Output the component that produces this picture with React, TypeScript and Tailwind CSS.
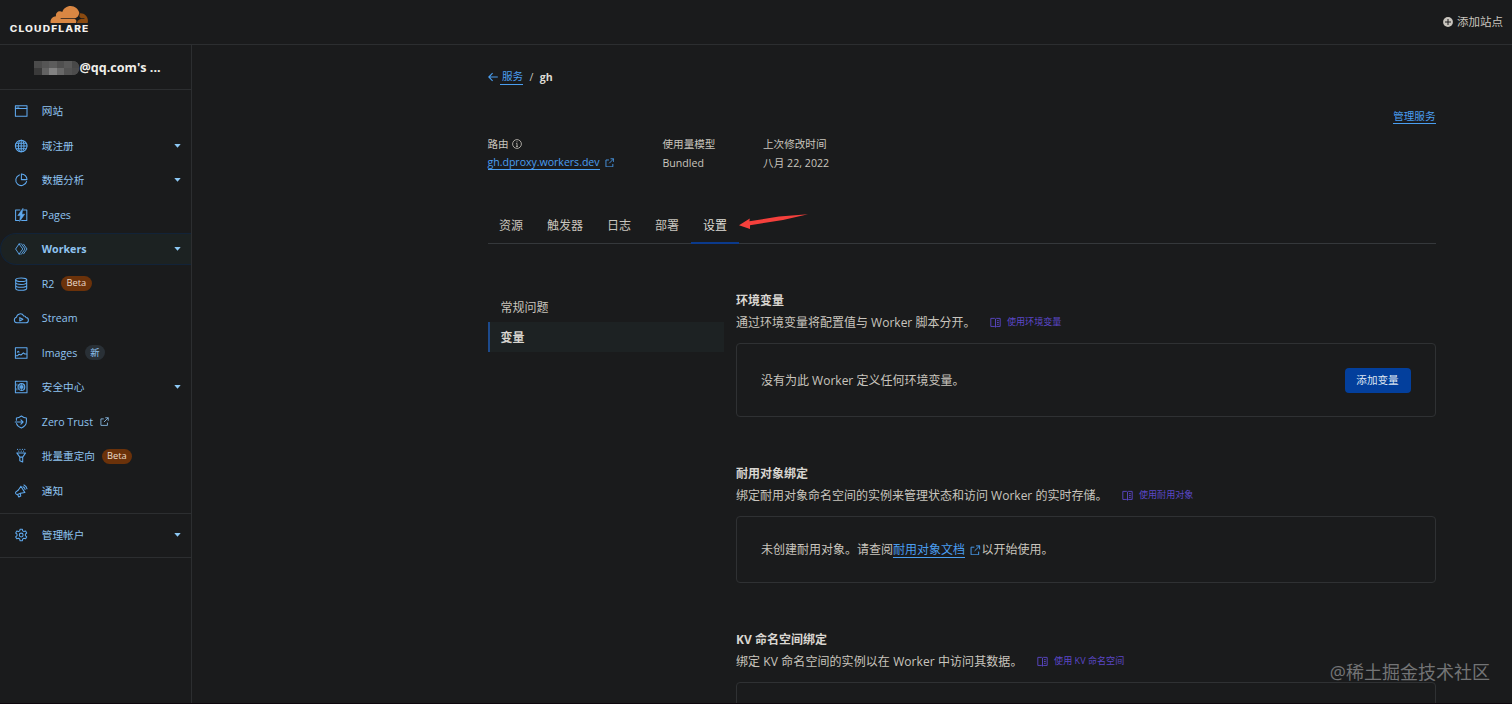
import type { ReactNode } from 'react';

type IconProps = { children: ReactNode };

function Icon({ children }: IconProps) {
  return (
    <svg
      viewBox="0 0 16 16"
      className="h-4 w-4 shrink-0 overflow-visible"
      fill="none"
      stroke="#5fa9ee"
      strokeWidth="1.050"
      strokeLinejoin="round"
      strokeLinecap="round"
    >
      {children}
    </svg>
  );
}

const icons = {
  site: (
    <Icon>
      <rect x="2.4" y="2.700" width="11.6" height="10.600" />
      <path d="M2.4 5.500h11.4M4 4.100h.3M5.6 4.100h.3" />
    </Icon>
  ),
  globe: (
    <Icon>
      <circle cx="8.2" cy="8" r="5.8" />
      <ellipse cx="8.2" cy="8" rx="2.8" ry="5.8" />
      <path d="M8.2 2.2v11.6M2.4 8H14M3.200 5.2h10M3.200 10.8h10" />
    </Icon>
  ),
  pie: (
    <Icon>
      <path d="M6.400 2.900A5.5 5.5 0 1 0 13.6 9.500" />
      <path d="M8.400 1.900v5.700h5.600A5.7 5.7 0 0 0 8.400 1.900z" />
    </Icon>
  ),
  pages: (
    <Icon>
      <path d="M7 3H2.6v10.4h3.2M10.400 3h3.4v10.4H8.6" />
      <path d="M9.8 1.6 4.8 8.6h2.6l-.8 5.8 5-7.200H9z" fill="#5fa9ee" strokeWidth="0.6" />
    </Icon>
  ),
  workers: (
    <Icon>
      <path
        d="M6 3 2.6 8 6 13M6 3h1.200M6 13h1.200M6.400 3.400 9.8 8l-3.4 4.600M8.4 2.8 12 8l-3.600 5.200M10.6 3.200 14 8l-3.400 4.800"
        strokeWidth="0.9"
      />
    </Icon>
  ),
  r2: (
    <Icon>
      <ellipse cx="8.2" cy="3.7" rx="5.5" ry="1.8" />
      <path d="M2.7 3.7v8.8c0 1 2.4 1.8 5.5 1.8s5.5-.8 5.5-1.8V3.7M2.7 6.6c0 1 2.4 1.8 5.5 1.8s5.500-.8 5.500-1.8M2.700 9.5c0 1 2.4 1.8 5.500 1.8s5.500-.8 5.500-1.8" />
    </Icon>
  ),
  stream: (
    <Icon>
      <path d="M3.800 12.8h8.800a2.600 2.600 0 0 0 .400-5.200 2.100 2.100 0 0 0-2.300-1.600A3.800 3.800 0 0 0 3.500 7.300 2.800 2.800 0 0 0 3.800 12.800z" />
      <path d="M6.800 7.600v3.400L9.900 9.300z" />
    </Icon>
  ),
  images: (
    <Icon>
      <rect x="2.4" y="2.800" width="11.6" height="10.400" />
      <path d="M2.600 10.800H4.500L6 9.200l2 .8 2.400-2.200 1.300 1.200h2M4.400 7.200l.8-.8.8.800" />
    </Icon>
  ),
  security: (
    <Icon>
      <rect x="2.4" y="2.2" width="11.6" height="11.6" />
      <circle cx="8.4" cy="8" r="3.400" />
      <circle cx="8.4" cy="8" r="1.300" />
      <path d="M8.4 4.8v6.4M5.200 8h6.4M6.200 5.8l4.4 4.4M10.6 5.8 6.200 10.2M3.9 5v1.4M3.9 9.6V11" strokeWidth="0.8" />
    </Icon>
  ),
  zero: (
    <Icon>
      <path d="M3.400 6.200V4C5.200 4 6.900 3.200 8.400 2c1.500 1.200 3.200 2 5 2v3.600c0 3-2 5.200-5 6.400-2.600-1-4.400-2.700-4.900-4.400" />
      <path d="M2.200 8H10M7.900 5.900 10.100 8l-2.200 2.100" />
    </Icon>
  ),
  funnel: (
    <Icon>
      <path d="M3.800 4.900h8.800L9.700 9.100v4.900l-2.900-1.300V9.100zM6.900 9.100h2.600" />
      <path d="M4.600 1.300v.2M7 1.300v.2M9.400 1.300v.2M11.800 1.300v.2M5.800 3v.2M8.200 3v.2M10.600 3v.2" />
    </Icon>
  ),
  notify: (
    <Icon>
      <path d="M7.900 3.200 5.400 7 2.700 9.200c-.6.900.5 2.400 1.700 2.300l3.200-1.300 4.300-.6z" />
      <path d="M4.600 11.500 5.800 14l2-1-.6-2.600M10 3.800c1.100.5 1.900 1.400 2.100 2.600M11 1.900c1.600.7 2.700 2 3 3.900" />
    </Icon>
  ),
  gear: (
    <Icon>
      <path d="M7.100 2.200h2.200l.4 1.700 1.200.7 1.700-.5 1.100 1.900-1.300 1.200v1.500l1.300 1.200-1.100 1.900-1.700-.5-1.200.7-.4 1.800H7.100L6.700 12l-1.200-.7-1.700.5-1.100-1.900L4 8.700V7.200L2.700 6l1.100-1.900 1.700.5 1.200-.7z" />
      <circle cx="8.200" cy="8" r="1.900" />
    </Icon>
  ),
};

function External({ className }: { className: string }) {
  return (
    <svg viewBox="0 0 12 12" className={className} fill="none" stroke="currentColor" strokeWidth="1.1">
      <path d="M5 2.500H1.200v8.700h8.700V7.500M7 1h4v4M11 1 5.300 6.700" />
    </svg>
  );
}

type Item = {
  icon: ReactNode;
  label: string;
  caret?: boolean;
  badge?: string;
  isNew?: boolean;
  external?: boolean;
  active?: boolean;
};

const items: Item[] = [
  { icon: icons.site, label: '网站' },
  { icon: icons.globe, label: '域注册', caret: true },
  { icon: icons.pie, label: '数据分析', caret: true },
  { icon: icons.pages, label: 'Pages' },
  { icon: icons.workers, label: 'Workers', caret: true, active: true },
  { icon: icons.r2, label: 'R2', badge: 'Beta' },
  { icon: icons.stream, label: 'Stream' },
  { icon: icons.images, label: 'Images', isNew: true },
  { icon: icons.security, label: '安全中心', caret: true },
  { icon: icons.zero, label: 'Zero Trust', external: true },
  { icon: icons.funnel, label: '批量重定向', badge: 'Beta' },
  { icon: icons.notify, label: '通知' },
];

function NavRow({ item }: { item: Item }) {
  return (
    <li className="flex h-[34.5px] items-center">
      <a
        className={
          item.active
            ? 'flex h-8 w-full items-center rounded-l-2xl border-y border-l border-[#122338] bg-[#1c2222] pr-[10px] pl-[12px] font-bold'
            : 'flex h-8 w-full items-center pr-[10px] pl-[13px]'
        }
      >
        {item.icon}
        <span className="ml-[12.800px] whitespace-nowrap">{item.label}</span>
        {item.badge && (
          <span className="ml-[6.500px] h-[15px] rounded-full bg-[#6b320a] px-[5.500px] text-[9.300px] leading-[14px] text-[#ecdccb]">
            {item.badge}
          </span>
        )}
        {item.isNew && (
          <span className="ml-[7.500px] h-[15px] rounded-full bg-[#293036] px-[5.500px] text-[9.300px] leading-[15px] text-[#8fc3f0]">
            新
          </span>
        )}
        {item.external && <External className="ml-[7px] h-[9px] w-[9px]" />}
        {item.caret && (
          <svg viewBox="0 0 8 5" className="ml-auto h-[4px] w-[7px]" fill="#8cc8f5">
            <path d="M0 0h8L4 4.800z" />
          </svg>
        )}
      </a>
    </li>
  );
}

function DocLink({ children }: IconProps) {
  return (
    <a className="ml-[14.500px] flex items-center text-[9.100px] text-[#5b47c6]">
      <svg viewBox="0 0 12 12" className="mr-[6px] h-[11px] w-[11px]" fill="none" stroke="currentColor" strokeWidth="1">
        <path d="M6 2.200 5 1.500H.9v8.800H5l1 .7 1-.7h4.100V1.500H7zM6 2.200V11M7.600 4h2M7.600 6h2M7.600 8h2" />
      </svg>
      {children}
    </a>
  );
}

type SectionProps = { title: string; desc: string; doc: string; card: string; wide?: boolean; children?: ReactNode };

function Section({ title, desc, doc, card, wide, children }: SectionProps) {
  return (
    <section>
      <h2 className="h-5 text-[12px] leading-[22px] font-bold text-[#d9d6d1]">{title}</h2>
      <div className="mt-px flex h-[22px] items-center whitespace-nowrap">
        <p className={wide ? 'pt-[2px] tracking-[0.080px]' : 'pt-[2px]'}>{desc}</p>
        <DocLink>{doc}</DocLink>
      </div>
      <div className={card}>{children}</div>
    </section>
  );
}

const tabs = ['资源', '触发器', '日志', '部署'];

export default function App() {
  return (
    <div className="relative flex h-[704px] w-[1512px] flex-col overflow-hidden bg-[#1a1b1c] font-['Open_Sans','Noto_Sans_CJK_SC',sans-serif] text-[12px] leading-5 text-[#c9c5be]">
      <header className="flex h-[45px] shrink-0 justify-between border-b border-[#2c2e30] pr-[9px] pl-[9px]">
        <svg viewBox="0 0 82 36" className="h-9 w-[82px]">
          <g transform="translate(41.500 -4.300) scale(1.560)">
            <path
              fill="#d98743"
              d="M16.5088 16.8447c.1475-.5068.0908-.9707-.1553-1.3154-.2246-.3164-.6045-.499-1.0615-.5205l-8.6592-.1123a.1559.1559 0 0 1-.1333-.0713c-.0283-.042-.0351-.0986-.021-.1553.0278-.084.1123-.1484.2036-.1562l8.7359-.1123c1.0351-.0489 2.1601-.8868 2.5537-1.9136l.499-1.3013c.0215-.0561.0293-.1128.0147-.168-.5625-2.5463-2.835-4.4453-5.5499-4.4453-2.5039 0-4.6284 1.6177-5.3876 3.8614-.4927-.3658-1.1187-.5625-1.794-.499-1.2026.119-2.1665 1.083-2.2861 2.2856-.0283.31-.0069.6128.0635.894C1.5683 13.171 0 14.7754 0 16.752c0 .1748.0142.3515.0352.5273.0141.083.0844.1475.1689.1475h15.9814c.0909 0 .1758-.0645.2032-.1553l.12-.4268z"
            />
            <path
              fill="#8a4a10"
              d="M19.2656 11.2813c-.0771 0-.1611 0-.2383.0112-.0566 0-.1054.0415-.127.0976l-.3378 1.1744c-.1475.5068-.0918.9707.1543 1.3164.2256.3164.6055.498 1.0625.5195l1.8437.1133c.0557 0 .1055.0263.1329.0703.0283.043.0351.1074.0214.1562-.0283.084-.1132.1485-.204.1553l-1.921.1123c-1.041.0488-2.1582.8867-2.5527 1.914l-.1406.3585c-.0283.0713.0215.1416.0986.1416h6.5977c.0771 0 .1474-.0489.169-.126.1122-.4082.1757-.837.1757-1.2803 0-2.6025-2.125-4.727-4.7344-4.727"
            />
          </g>
          <text
            x="0.500"
            y="32.400"
            transform="translate(0.100 0) scale(1.200 1)"
            textLength="65.500"
            lengthAdjust="spacing"
            className="fill-[#f2f0ec] font-['Inter',sans-serif] text-[8.500px] font-extrabold"
          >
            CLOUDFLARE
          </text>
        </svg>
        <a className="flex h-[43px] items-center text-[11.500px]">
          <svg viewBox="0 0 10 10" className="mr-1 h-[10px] w-[10px]">
            <circle cx="5" cy="5" r="4.900" fill="#c9c5be" />
            <path d="M5 2v6M2 5h6" stroke="#1a1b1c" strokeWidth="1" />
          </svg>
          添加站点
        </a>
      </header>

      <div className="flex min-h-0 flex-1">
        <nav className="w-[192px] shrink-0 border-r border-[#2c2e30] text-[10.650px] text-[#8fc3f0]">
          <div className="flex h-[45px] items-center border-b border-[#2c2e30] pl-[34px] text-[12.600px] font-bold text-[#f0eeea]">
            <span className="mt-px grid h-[14px] w-[45px] grid-cols-6 grid-rows-2 overflow-hidden rounded-r-md bg-[#555]">
              <i className="bg-[#4b4b4b]" />
              <i className="bg-[#555555]" />
              <i className="bg-[#5c5c5c]" />
              <i className="bg-[#4f4f4f]" />
              <i className="bg-[#595959]" />
              <i className="bg-[#484848]" />
              <i className="bg-[#3a3a3a]" />
              <i className="bg-[#626262]" />
              <i className="bg-[#828282]" />
              <i className="bg-[#686868]" />
              <i className="bg-[#535353]" />
              <i className="bg-[#4c4c4c]" />
            </span>
            <span className="pt-[2px] pl-[0.500px] whitespace-nowrap">@qq.com's ...</span>
          </div>
          <ul className="h-[424px] border-b border-[#2c2e30] pt-[4.200px]">
            {items.map((item) => (
              <NavRow key={item.label} item={item} />
            ))}
          </ul>
          <ul className="h-[44px] border-b border-[#2c2e30] pt-[4px]">
            <NavRow item={{ icon: icons.gear, label: '管理帐户', caret: true }} />
          </ul>
        </nav>

        <main className="ml-[295.500px] w-[948px]">
          <div className="mt-[22px] flex h-5 items-center text-[10.600px]">
            <svg viewBox="0 0 10 10" className="mr-[2px] h-[10px] w-[10px]" fill="none" stroke="#4a9ef0" strokeWidth="1.100">
              <path d="M9.800 5H.8M4.600 1.200.8 5l3.800 3.800" />
            </svg>
            <a className="border-b border-[#4a9ef0] pl-[2.500px] leading-[15px] text-[#4a9ef0]">服务</a>
            <span className="mx-[6.300px]">/</span>
            <b className="text-[#dedbd5]">gh</b>
          </div>
          <div className="mt-[19px] flex h-5 items-center justify-end text-[10.600px]">
            <a className="border-b border-[#4a9ef0] leading-[14px] text-[#4a9ef0]">管理服务</a>
          </div>
          <dl className="mt-[9px] flex h-[36px] text-[10.600px] leading-[18px] whitespace-nowrap">
            <div className="w-[175px]">
              <dt className="flex items-center">
                路由
                <svg viewBox="0 0 10 10" className="ml-[3.500px] h-[10px] w-[10px]" fill="none" stroke="currentColor" strokeWidth="0.800">
                  <circle cx="5" cy="5" r="4.400" />
                  <path d="M4.200 4.400H5v3M4 7.400h2M5 2.300v1" />
                </svg>
              </dt>
              <dd className="flex h-[19px] items-center text-[#4a9ef0]">
                <a className="border-b border-[#4a9ef0] leading-[14px] tracking-[-0.030px]">gh.dproxy.workers.dev</a>
                <External className="ml-[5px] h-[9.500px] w-[9.500px]" />
              </dd>
            </div>
            <div className="w-[100.500px]">
              <dt>使用量模型</dt>
              <dd className="leading-[20px]">Bundled</dd>
            </div>
            <div>
              <dt>上次修改时间</dt>
              <dd className="leading-[20px] tracking-[0.040px]">八月 22, 2022</dd>
            </div>
          </dl>

          <div className="mt-[36px] flex h-[37px] border-b border-[#35383b] leading-[38px]">
            {tabs.map((tab) => (
              <a key={tab} className="px-[12px] first:pl-[11.500px]">
                {tab}
              </a>
            ))}
            <a className="h-[37px] border-b-2 border-[#0b3a8c] px-[12px] text-[#dedbd5]">设置</a>
            <svg viewBox="0 0 70 16" className="mt-[7px] h-4 w-[70px]" fill="#f5403c">
              <path d="M0 11.200 10.800 4.600 10.400 7.200 40 2.600 69 .3 44 6 11 11.200 11 15z" />
            </svg>
          </div>

          <div className="mt-[46px] flex">
            <aside className="mr-[12px] w-[237px] pt-[2px]">
              <a className="block h-[30px] pl-[13px] leading-[32px]">常规问题</a>
              <a className="block h-[30px] border-l-2 border-[#1d4a8c] bg-[#1d2223] pl-[11px] leading-[31px] font-bold text-[#d9d6d1]">
                变量
              </a>
            </aside>
            <div className="w-[699.500px] shrink-0">
              <Section
                title="环境变量"
                desc="通过环境变量将配置值与 Worker 脚本分开。"
                doc="使用环境变量"
                card="mt-[10px] mb-[46px] flex h-[74px] items-center justify-between rounded border border-[#2f3133] px-6"
              >
                <span className="pt-px">没有为此 Worker 定义任何环境变量。</span>
                <button className="h-[25px] w-[66px] rounded bg-[#033f9c] text-[10.600px] leading-[25px] text-[#dfe6f2]">添加变量</button>
              </Section>
              <Section
                title="耐用对象绑定"
                desc="绑定耐用对象命名空间的实例来管理状态和访问 Worker 的实时存储。"
                doc="使用耐用对象"
                card="mt-[10px] mb-[46px] flex h-[67px] items-center rounded border border-[#2f3133] px-6 pt-px"
              >
                未创建耐用对象。请查阅
                <a className="border-b border-[#4a9ef0] leading-[15px] text-[#4a9ef0]">耐用对象文档</a>
                <External className="mr-px ml-[5px] h-[10.500px] w-[10.500px] text-[#4a9ef0]" />
                以开始使用。
              </Section>
              <Section
                title="KV 命名空间绑定"
                desc="绑定 KV 命名空间的实例以在 Worker 中访问其数据。"
                doc="使用 KV 命名空间"
                wide
                card="mt-[10px] h-[74px] rounded border border-[#2f3133]"
              />
            </div>
          </div>
        </main>
      </div>
      <div className="absolute right-[22px] bottom-[20px] text-[18px] leading-6 text-[#737475]">@稀土掘金技术社区</div>
      <div className="absolute inset-x-0 bottom-0 h-px bg-[#0d070d]" />
    </div>
  );
}
